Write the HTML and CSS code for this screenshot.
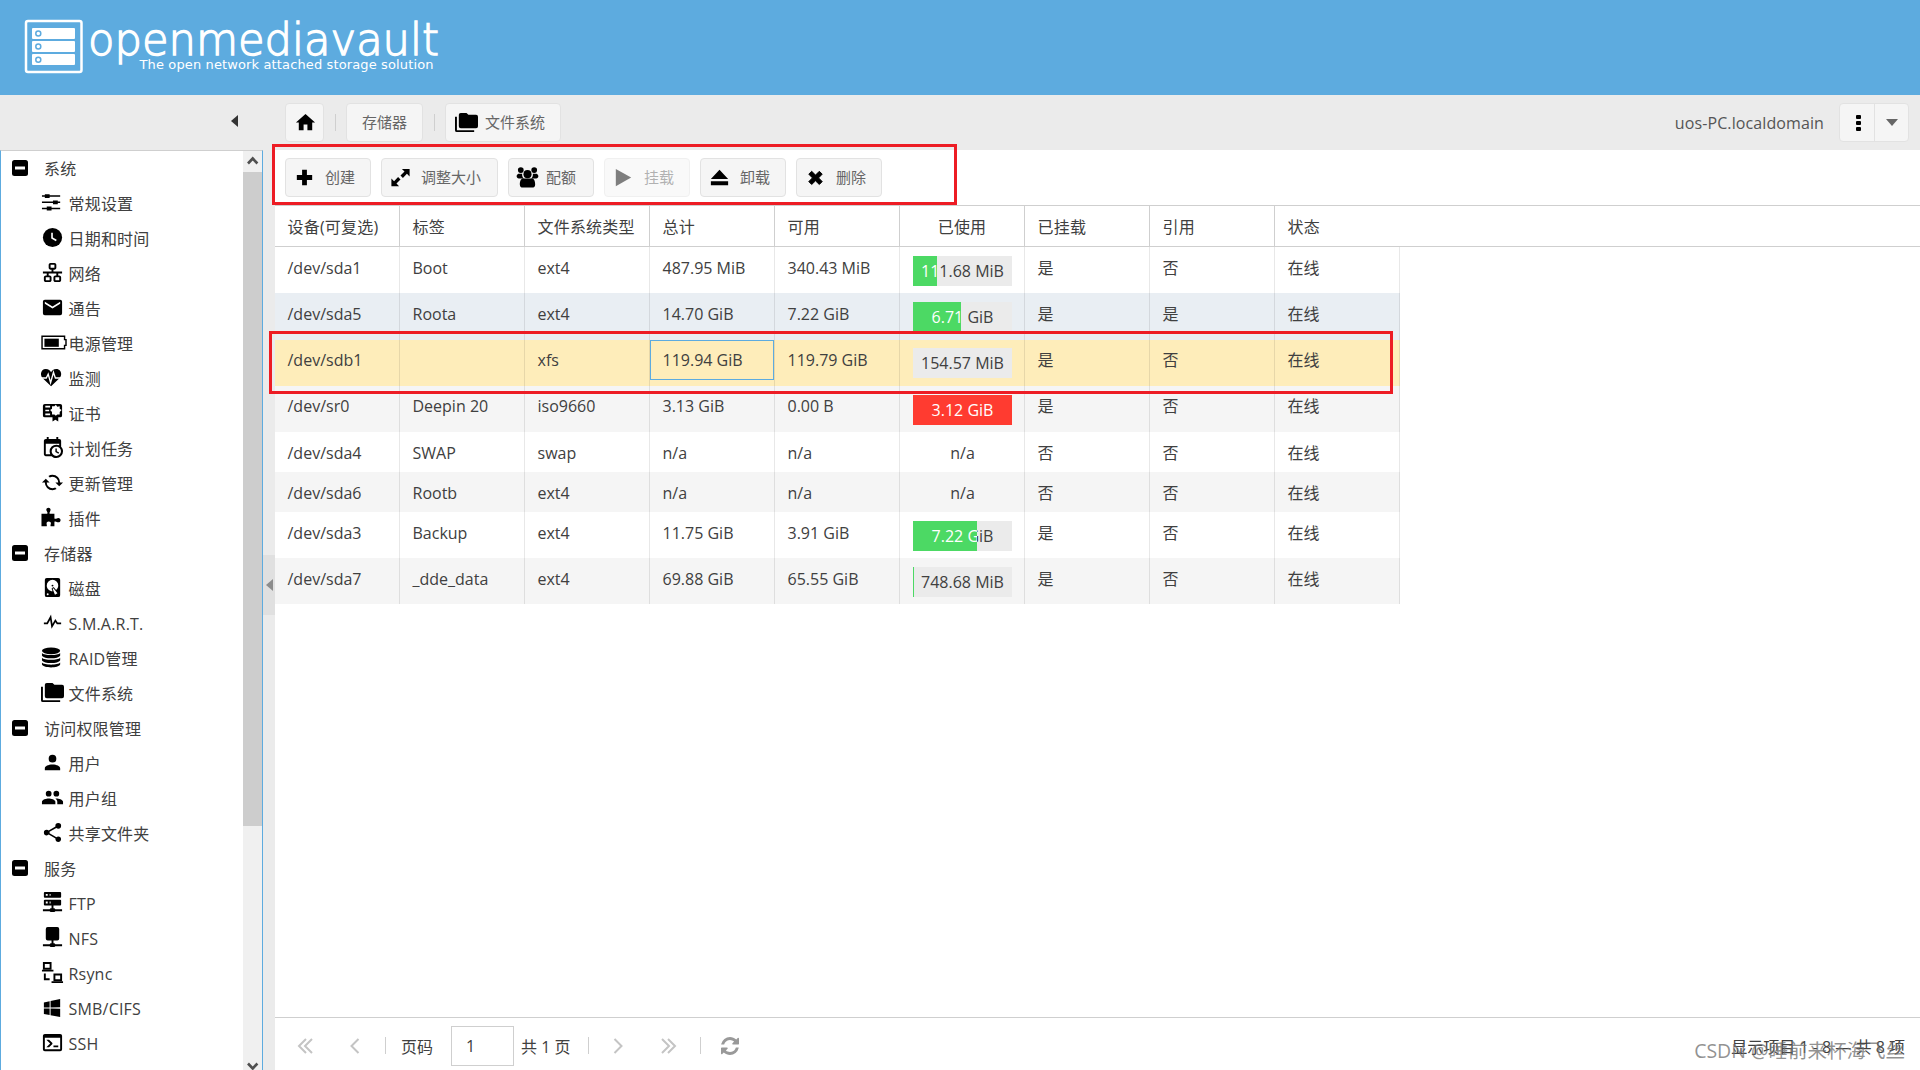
FILE: index.html
```html
<!DOCTYPE html>
<html lang="zh-CN">
<head>
    <meta charset="UTF-8">
    <meta name="viewport" content="width=device-width, initial-scale=1.0">
    <title>openmediavault</title>
    <link rel="stylesheet" href="styles.css">
</head>
<body>
    <!-- Icon definitions -->
    <svg class="defs">
        <symbol id="minus" viewBox="0 0 16 16"><rect width="16" height="16" rx="2.5"/><path d="M3 6.5h10v3H3z" fill="#fff"/></symbol>
        <symbol id="home" viewBox="0 0 24 24"><path d="M10,20V14H14V20H19V12H22L12,3L2,12H5V20H10Z"/></symbol>
        <symbol id="tune" viewBox="0 0 24 24"><path d="M1 4.500h19v1.600H1zM1 11h19v1.600H1zM1 17.500h19v1.600H1z"/><path d="M4 3.300h5v4H4zM12.500 9.800h5v4h-5zM6 16.300h5v4H6z"/></symbol>
        <symbol id="clock" viewBox="0 0 24 24"><circle cx="12" cy="12" r="10"/><path d="M11.500 7v5.500l4.500 2.700" fill="none" stroke="#fff" stroke-width="1.700"/></symbol>
        <symbol id="lan" viewBox="0 0 24 24"><path d="M10,2C8.89,2 8,2.89 8,4V7C8,8.11 8.89,9 10,9H11V11H2V13H6V15H5C3.89,15 3,15.89 3,17V20C3,21.11 3.89,22 5,22H9C10.11,22 11,21.11 11,20V17C11,15.89 10.11,15 9,15H8V13H16V15H15C13.89,15 13,15.89 13,17V20C13,21.11 13.89,22 15,22H19C20.11,22 21,21.11 21,20V17C21,15.89 20.11,15 19,15H18V13H22V11H13V9H14C15.11,9 16,8.11 16,7V4C16,2.89 15.11,2 14,2H10M10,4H14V7H10V4M5,17H9V20H5V17M15,17H19V20H15V17Z"/></symbol>
        <symbol id="email" viewBox="0 0 24 24"><path d="M20,8L12,13L4,8V6L12,11L20,6M20,4H4C2.89,4 2,4.89 2,6V18A2,2 0 0,0 4,20H20A2,2 0 0,0 22,18V6C22,4.89 21.1,4 20,4Z"/></symbol>
        <symbol id="battery" viewBox="0 0 28 24"><path d="M1 5.500h23.500v3.500H26v6h-1.500v3.500H1z" fill="none" stroke="#000" stroke-width="1.500"/><path d="M3.500 8h15v8.500h-15z"/></symbol>
        <symbol id="heart" viewBox="0 0 24 24"><path d="M10.500 21 1.500 12.500C-1.500 9 0 3 5 3c3 0 4.500 1.500 5.500 3.500C11.500 4.500 13 3 16 3c5 0 6.500 6 3.500 9.500z"/><path d="M0 12.500h5.500l2-4 2.500 9 3-11 2 6h6" fill="none" stroke="#fff" stroke-width="1.400"/></symbol>
        <symbol id="cert" viewBox="0 0 24 24"><path d="M4 3h16a2 2 0 0 1 2 2v10a2 2 0 0 1-2 2h-2v4.500l-3-2-3 2V17H4a2 2 0 0 1-2-2V5a2 2 0 0 1 2-2z"/><path d="M4.500 5h5v1.800h-5zM4.500 9h4v1.800h-4zM4.500 13h5v1.800h-5zM15.500 4l1.500 2 2.500-.5v2.500l2 1.500-2 2v2.500H17l-1.500 1.500L14 14h-2.500v-2.500l-2-2 2-1.500V5.500H14z" fill="#fff"/></symbol>
        <symbol id="calendar" viewBox="0 0 24 24"><path d="M15,13H16.5V15.82L18.94,17.23L18.19,18.53L15,16.69V13M19,8H5V19H9.67C9.24,18.09 9,17.07 9,16A7,7 0 0,1 16,9C17.07,9 18.09,9.24 19,9.67V8M5,21C3.89,21 3,20.1 3,19V5C3,3.89 3.89,3 5,3H6V1H8V3H16V1H18V3H19A2,2 0 0,1 21,5V11.1C22.24,12.36 23,14.09 23,16A7,7 0 0,1 16,23C14.09,23 12.36,22.24 11.1,21H5M16,11.15A4.85,4.85 0 0,0 11.15,16C11.15,18.68 13.32,20.85 16,20.85A4.85,4.85 0 0,0 20.85,16C20.85,13.32 18.68,11.15 16,11.15Z"/></symbol>
        <symbol id="update" viewBox="0 0 24 24"><path transform="matrix(1 0 0 -1 0 24)" d="M19,8L15,12H18A6,6 0 0,1 12,18C11,18 10.03,17.75 9.2,17.3L7.74,18.76C8.97,19.54 10.43,20 12,20A8,8 0 0,0 20,12H23M6,12A6,6 0 0,1 12,6C13,6 13.97,6.25 14.8,6.7L16.26,5.24C15.03,4.46 13.57,4 12,4A8,8 0 0,0 4,12H1L5,16L9,12"/></symbol>
        <symbol id="puzzle" viewBox="0 0 24 24"><path d="M.5 8h6c1-1.500-1-2.500-1-4 0-3 4.500-3 4.500 0 0 1.500-1.500 2.500-1 4h5v5c1.500 1 2.500-.5 4-.5 3.200 0 3.200 4.500 0 4.500-1.500 0-2.500-1.500-4-.5V21h-4c-.5-1.500 1-2.500 0-4-1-1.200-3-1.200-3.800 0-1 1.500.3 2.500-.2 4H.5z"/></symbol>
        <symbol id="disk" viewBox="0 0 24 24"><path d="M6,2H18A2,2 0 0,1 20,4V20A2,2 0 0,1 18,22H6A2,2 0 0,1 4,20V4A2,2 0 0,1 6,2M12,4A6,6 0 0,0 6,10C6,13.31 8.69,16 12.1,16L11.22,13.77C10.95,13.29 11.11,12.68 11.59,12.4L12.45,11.9C12.93,11.63 13.54,11.79 13.82,12.27L15.74,14.69C17.12,13.59 18,11.9 18,10A6,6 0 0,0 12,4M12,9A1,1 0 0,1 13,10A1,1 0 0,1 12,11A1,1 0 0,1 11,10A1,1 0 0,1 12,9M7,18A1,1 0 0,0 6,19A1,1 0 0,0 7,20A1,1 0 0,0 8,19A1,1 0 0,0 7,18M12.09,13.27L14.58,19.58L17.17,18.08L12.95,12.77L12.09,13.27Z"/></symbol>
        <symbol id="pulse" viewBox="0 0 24 24"><path d="M3 13h3.500L10 6.500l1.500 9.500 3.500-6 2 3h4" fill="none" stroke="#000" stroke-width="1.800"/></symbol>
        <symbol id="database" viewBox="0 0 24 24"><ellipse cx="10.500" cy="5" rx="9.500" ry="3.500"/><path d="M1 7.200c2 3 17 3 19 0v2.600c-2 4-17 4-19 0zM1 12.200c2 3 17 3 19 0v2.600c-2 4-17 4-19 0zM1 17.200c2 3 17 3 19 0v2.200c-2 4-17 4-19 0z"/></symbol>
        <symbol id="folders" viewBox="0 0 24 24"><path d="M22,4H14L12,2H6A2,2 0 0,0 4,4V16A2,2 0 0,0 6,18H22A2,2 0 0,0 24,16V6A2,2 0 0,0 22,4M2,6H0V20A2,2 0 0,0 2,22H20V20H2V6Z"/></symbol>
        <symbol id="user" viewBox="0 0 24 24"><path d="M12,4A4,4 0 0,1 16,8A4,4 0 0,1 12,12A4,4 0 0,1 8,8A4,4 0 0,1 12,4M12,14C16.42,14 20,15.79 20,18V20H4V18C4,15.79 7.58,14 12,14Z"/></symbol>
        <symbol id="users" viewBox="0 0 24 24"><path d="M16,13C15.71,13 15.38,13 15.03,13.05C16.19,13.89 17,15 17,16.5V19H23V16.5C23,14.17 18.33,13 16,13M8,13C5.67,13 1,14.17 1,16.5V19H15V16.5C15,14.17 10.33,13 8,13M8,11A3,3 0 0,0 11,8A3,3 0 0,0 8,5A3,3 0 0,0 5,8A3,3 0 0,0 8,11M16,11A3,3 0 0,0 19,8A3,3 0 0,0 16,5A3,3 0 0,0 13,8A3,3 0 0,0 16,11Z"/></symbol>
        <symbol id="share" viewBox="0 0 24 24"><path d="M18,16.08C17.24,16.08 16.56,16.38 16.04,16.85L8.91,12.7C8.96,12.47 9,12.24 9,12C9,11.76 8.96,11.53 8.91,11.3L15.96,7.19C16.5,7.69 17.21,8 18,8A3,3 0 0,0 21,5A3,3 0 0,0 18,2A3,3 0 0,0 15,5C15,5.24 15.04,5.47 15.09,5.7L8.04,9.81C7.5,9.31 6.79,9 6,9A3,3 0 0,0 3,12A3,3 0 0,0 6,15C6.79,15 7.5,14.69 8.04,14.19L15.16,18.34C15.11,18.55 15.08,18.77 15.08,19C15.08,20.61 16.39,21.91 18,21.91C19.61,21.91 20.92,20.61 20.92,19A2.92,2.92 0 0,0 18,16.08Z"/></symbol>
        <symbol id="ftp" viewBox="0 0 24 24"><path d="M4 1h16a1 1 0 0 1 1 1v4a1 1 0 0 1-1 1H4a1 1 0 0 1-1-1V2a1 1 0 0 1 1-1zM4 9h16a1 1 0 0 1 1 1v4a1 1 0 0 1-1 1h-7v3h1l1 1h7v2h-7l-1 1h-4l-1-1H2v-2h7l1-1h1v-3H4a1 1 0 0 1-1-1v-4a1 1 0 0 1 1-1z"/><path d="M5 3h2v2H5zM9 3h1v2H9zM5 11h2v2H5zM9 11h1v2H9z" fill="#fff"/></symbol>
        <symbol id="nfs" viewBox="0 0 24 24"><path d="M7 1h10a2 2 0 0 1 2 2v10a2 2 0 0 1-2 2h-4v3h1l1 1h7v2h-7l-1 1h-4l-1-1H2v-2h7l1-1h1v-3H7a2 2 0 0 1-2-2V3a2 2 0 0 1 2-2z"/></symbol>
        <symbol id="rsync" viewBox="0 0 24 24"><path d="M3 2h7v6H3zM14 14h7v6h-7z" fill="none" stroke="#000" stroke-width="2"/><path d="M1 9h12v2H1zM11 21h12v2H11zM3 13h2v5h4v2H3z"/></symbol>
        <symbol id="windows" viewBox="0 0 24 24"><path d="M3,12V6.75L9,5.43V11.91L3,12M20,3V11.75L10,11.9V5.21L20,3M3,13L9,13.09V19.9L3,18.75V13M20,13.25V22L10,20.09V13.1L20,13.25Z"/></symbol>
        <symbol id="console" viewBox="0 0 24 24"><path d="M20,19V7H4V19H20M20,3A2,2 0 0,1 22,5V19A2,2 0 0,1 20,21H4A2,2 0 0,1 2,19V5C2,3.89 2.9,3 4,3H20M13,17V15H18V17H13M9.58,13L5.57,9H8.4L11.7,12.3C12.09,12.69 12.09,13.33 11.7,13.72L8.42,17H5.59L9.58,13Z"/></symbol>
        <symbol id="plus" viewBox="0 0 24 24"><path d="M9.500 4h5v5.500H20v5h-5.500V20h-5v-5.500H4v-5h5.500z"/></symbol>
        <symbol id="expand" viewBox="0 0 24 24"><path d="M13.500 3H21.500V11L18.700 8.200 14.500 12.400 12 9.900 16.200 5.700zM2.500 13l2.800 2.800 4.200-4.200 2.500 2.500-4.200 4.200L10.500 21h-8z"/></symbol>
        <symbol id="group" viewBox="0 0 24 24"><circle cx="5" cy="4.300" r="3"/><circle cx="19" cy="4.300" r="3"/><circle cx="12" cy="8.500" r="4.200"/><path d="M2.500 8h4c-.5 2 .5 4 1.500 5H3C.5 13-.5 9.500 2.500 8zM21.500 8h-4c.5 2-.5 4-1.500 5h5c2.500 0 3.500-3.500.5-5zM7.500 13h9c2.500 0 3.500 3 3.500 6.500 0 2-1.500 3-3 3H7c-1.500 0-3-1-3-3C4 16 5 13 7.500 13z"/></symbol>
        <symbol id="play" viewBox="0 0 24 24"><path d="M4 3 20 12 4 21z"/></symbol>
        <symbol id="eject" viewBox="0 0 24 24"><path d="M12 4 21 13.500H3zM3 16h18v4H3z"/></symbol>
        <symbol id="cross" viewBox="0 0 24 24"><path d="M8 5.500 12 9.500 16 5.500 19 8.500 15.200 12.400 19 16.300 16 19.300 12 15.500 8 19.300 5 16.300 8.800 12.400 5 8.500z" stroke="#000" stroke-linejoin="round"/></symbol>
        <symbol id="refresh" viewBox="0 0 1536 1536"><path d="M1511 928q0 5-1 7-64 268-268 434.5t-478 166.5q-146 0-282.500-55t-243.500-157l-129 129q-19 19-45 19t-45-19-19-45v-448q0-26 19-45t45-19h448q26 0 45 19t19 45-19 45l-137 137q71 66 161 102t187 36q134 0 250-65t186-179q11-17 53-117 8-23 30-23h192q13 0 22.500 9.500t9.500 22.500zm25-800v448q0 26-19 45t-45 19h-448q-26 0-45-19t-19-45 19-45l138-138q-148-137-349-137-134 0-250 65t-186 179q-11 17-53 117-8 23-30 23h-199q-13 0-22.500-9.500t-9.500-22.500v-7q65-268 270-434.500t480-166.500q146 0 284 55.500t245 156.500l130-129q19-19 45-19t45 19 19 45z"/></symbol>
        <symbol id="chevron" viewBox="0 0 10 16"><path d="M8.500 1 1.500 8l7 7" fill="none" stroke="#c4c4c4" stroke-width="2"/></symbol>
        <symbol id="dchevron" viewBox="0 0 16 16"><path d="M9 1 2 8l7 7M15 1 8 8l7 7" fill="none" stroke="#c4c4c4" stroke-width="2"/></symbol>
    </svg>

    <header>
        <svg class="logo" width="450" height="95">
            <rect x="26" y="21" width="55.500" height="51" rx="2" fill="none" stroke="#fff" stroke-width="2.500"/>
            <g fill="#fff">
                <rect x="32" y="28" width="43" height="11" rx="1"/>
                <rect x="32" y="41" width="43" height="11" rx="1"/>
                <rect x="32" y="54" width="43" height="11" rx="1"/>
            </g>
            <g fill="none" stroke="#5dabdf" stroke-width="1.500">
                <circle cx="38.300" cy="33.500" r="2.500"/>
                <circle cx="38.300" cy="46.500" r="2.500"/>
                <circle cx="38.300" cy="59.700" r="2.500"/>
            </g>
            <text class="logo-name" x="88" y="54.500" textLength="351" lengthAdjust="spacingAndGlyphs">openmediavault</text>
            <text class="logo-tag" x="139.500" y="69" textLength="294">The open network attached storage solution</text>
        </svg>
    </header>

    <div class="topbar">
        <div class="collapse"><span class="tri-left"></span></div>
        <div class="crumbs">
            <a class="btn btn-home"><svg class="icon"><use href="#home"/></svg></a>
            <span class="sep"></span>
            <a class="btn btn-storage">存储器</a>
            <span class="sep"></span>
            <a class="btn btn-fs"><svg class="icon"><use href="#folders"/></svg>文件系统</a>
        </div>
        <span class="host">uos-PC.localdomain</span>
        <div class="split-btn">
            <span class="dots"><i></i><i></i><i></i></span>
            <span class="drop"><span class="tri-down"></span></span>
        </div>
    </div>

    <div class="container">
        <nav>
            <ul class="tree">
                <li class="parent"><svg><use href="#minus"/></svg>系统</li>
                <li><svg><use href="#tune"/></svg>常规设置</li>
                <li><svg><use href="#clock"/></svg>日期和时间</li>
                <li><svg><use href="#lan"/></svg>网络</li>
                <li><svg><use href="#email"/></svg>通告</li>
                <li class="wide"><svg><use href="#battery"/></svg>电源管理</li>
                <li><svg><use href="#heart"/></svg>监测</li>
                <li><svg><use href="#cert"/></svg>证书</li>
                <li><svg><use href="#calendar"/></svg>计划任务</li>
                <li><svg><use href="#update"/></svg>更新管理</li>
                <li><svg><use href="#puzzle"/></svg>插件</li>
                <li class="parent"><svg><use href="#minus"/></svg>存储器</li>
                <li><svg><use href="#disk"/></svg>磁盘</li>
                <li class="latin"><svg><use href="#pulse"/></svg>S.M.A.R.T.</li>
                <li><svg><use href="#database"/></svg>RAID管理</li>
                <li><svg><use href="#folders"/></svg>文件系统</li>
                <li class="parent"><svg><use href="#minus"/></svg>访问权限管理</li>
                <li><svg><use href="#user"/></svg>用户</li>
                <li><svg><use href="#users"/></svg>用户组</li>
                <li><svg><use href="#share"/></svg>共享文件夹</li>
                <li class="parent"><svg><use href="#minus"/></svg>服务</li>
                <li class="latin"><svg><use href="#ftp"/></svg>FTP</li>
                <li class="latin"><svg><use href="#nfs"/></svg>NFS</li>
                <li class="latin"><svg><use href="#rsync"/></svg>Rsync</li>
                <li class="latin"><svg><use href="#windows"/></svg>SMB/CIFS</li>
                <li class="latin"><svg><use href="#console"/></svg>SSH</li>
            </ul>
            <div class="scrollbar">
                <svg class="arrow" viewBox="0 0 19 21"><path d="M5 12.500 9.700 7.500l4.700 5" fill="none" stroke="#505050" stroke-width="2.600"/></svg>
                <div class="thumb"></div>
                <svg class="arrow arrow-down" viewBox="0 0 19 21"><path d="M5 14.500 9.700 19.500l4.700-5" fill="none" stroke="#505050" stroke-width="2.600"/></svg>
            </div>
        </nav>
        <div class="splitter"><div class="handle"><span class="tri-left"></span></div></div>

        <main>
            <div class="toolbar">
                <button class="w86"><svg class="icon"><use href="#plus"/></svg>创建</button>
                <button class="w116"><svg class="icon"><use href="#expand"/></svg>调整大小</button>
                <button class="w86 quota"><svg class="icon"><use href="#group"/></svg>配额</button>
                <button class="w86" disabled><svg class="icon"><use href="#play"/></svg>挂载</button>
                <button class="w86"><svg class="icon"><use href="#eject"/></svg>卸载</button>
                <button class="w86"><svg class="icon"><use href="#cross"/></svg>删除</button>
            </div>

            <div class="thead">
                <span>设备(可复选)</span><span>标签</span><span>文件系统类型</span><span>总计</span><span>可用</span><span class="center">已使用</span><span>已挂载</span><span>引用</span><span>状态</span>
            </div>
            <div class="grid">
                <table>
                    <tbody id="fsTableBody">
                        <!-- File systems will be dynamically added here -->
                    </tbody>
                </table>
            </div>

            <div class="pager">
                <svg class="first"><use href="#dchevron"/></svg>
                <svg class="prev"><use href="#chevron"/></svg>
                <span class="sep"></span>
                <span class="page-label">页码</span>
                <input type="text" value="1">
                <span class="page-total">共 1 页</span>
                <span class="sep"></span>
                <svg class="next"><use href="#chevron"/></svg>
                <svg class="last"><use href="#dchevron"/></svg>
                <span class="sep"></span>
                <svg class="refresh"><use href="#refresh"/></svg>
                <span class="summary">显示项目 1 - 8 — 共 8 项</span>
            </div>
        </main>
    </div>

    <div class="mark mark-toolbar"></div>
    <div class="mark mark-row"></div>
    <div class="watermark">CSDN @睡前来杯海飞丝</div>

    <script>
        const filesystems = [
            { dev: '/dev/sda1', label: 'Boot', type: 'ext4', total: '487.95 MiB', free: '340.43 MiB', used: '111.68 MiB', percent: 24, mounted: '是', ref: '否' },
            { dev: '/dev/sda5', label: 'Roota', type: 'ext4', total: '14.70 GiB', free: '7.22 GiB', used: '6.71 GiB', percent: 48.5, mounted: '是', ref: '是', cls: 'over' },
            { dev: '/dev/sdb1', label: '', type: 'xfs', total: '119.94 GiB', free: '119.79 GiB', used: '154.57 MiB', percent: 0, mounted: '是', ref: '否', cls: 'selected' },
            { dev: '/dev/sr0', label: 'Deepin 20', type: 'iso9660', total: '3.13 GiB', free: '0.00 B', used: '3.12 GiB', percent: 100, mounted: '是', ref: '否', cls: 'full' },
            { dev: '/dev/sda4', label: 'SWAP', type: 'swap', total: 'n/a', free: 'n/a', used: 'n/a', mounted: '否', ref: '否', cls: 'short' },
            { dev: '/dev/sda6', label: 'Rootb', type: 'ext4', total: 'n/a', free: 'n/a', used: 'n/a', mounted: '否', ref: '否', cls: 'short' },
            { dev: '/dev/sda3', label: 'Backup', type: 'ext4', total: '11.75 GiB', free: '3.91 GiB', used: '7.22 GiB', percent: 65, mounted: '是', ref: '否' },
            { dev: '/dev/sda7', label: '_dde_data', type: 'ext4', total: '69.88 GiB', free: '65.55 GiB', used: '748.68 MiB', percent: 1.5, mounted: '是', ref: '否' }
        ];

        function usage(fs) {
            if (fs.percent === undefined) {
                return fs.used;
            }
            if (fs.percent === 0) {
                return `<div class="progress">${fs.used}</div>`;
            }
            return `<div class="progress">${fs.used}<div class="bar" style="width: ${fs.percent}%"><span>${fs.used}</span></div></div>`;
        }

        const tableBody = document.getElementById('fsTableBody');
        filesystems.forEach(fs => {
            const row = document.createElement('tr');
            row.className = fs.cls || '';
            row.innerHTML = `
                <td>${fs.dev}</td>
                <td>${fs.label}</td>
                <td>${fs.type}</td>
                <td>${fs.total}</td>
                <td>${fs.free}</td>
                <td class="center">${usage(fs)}</td>
                <td>${fs.mounted}</td>
                <td>${fs.ref}</td>
                <td>在线</td>
            `;
            tableBody.appendChild(row);
        });
    </script>
</body>
</html>
```
FILE: styles.css
```css
* {
    box-sizing: border-box;
}
body {
    font-family: "Open Sans", "Noto Sans CJK SC", sans-serif;
    font-size: 16px;
    font-weight: 400;
    color: #404040;
    margin: 0;
    height: 1070px;
    overflow: hidden;
    display: flex;
    flex-direction: column;
    background-color: #fff;
}
svg {
    display: block;
    flex: none;
}
.defs {
    position: absolute;
    width: 0;
    height: 0;
}
header {
    height: 95px;
    flex: none;
    background-color: #5dabdf;
}
.logo-name {
    font-family: "DejaVu Sans Light", "DejaVu Sans", sans-serif;
    font-weight: 200;
    font-size: 44px;
    fill: #fff;
    stroke: #fff;
    stroke-width: 1.3px;
}
.logo-tag {
    font-family: "DejaVu Sans", sans-serif;
    font-size: 13px;
    fill: #fff;
}

/* top bar */
.topbar {
    height: 55px;
    flex: none;
    display: flex;
    align-items: center;
    background-color: #ebebeb;
    padding-right: 11px;
}
.collapse {
    width: 285px;
    padding-left: 231px;
    padding-bottom: 3px;
}
.tri-left {
    display: block;
    width: 0;
    border: 6px solid transparent;
    border-left: 0;
    border-right: 7px solid #333;
}
.tri-down {
    width: 0;
    border: 6px solid transparent;
    border-bottom: 0;
    border-top: 7px solid #666;
}
.crumbs {
    display: flex;
    align-items: center;
}
.btn,
.toolbar button {
    height: 39px;
    display: flex;
    align-items: center;
    font-family: inherit;
    font-size: 15px;
    color: #666;
    background-color: #f5f5f5;
    border: 1px solid #e2e2e2;
    border-radius: 4px;
    padding: 0 0 2px;
}
.icon {
    width: 23px;
    height: 23px;
    margin-top: 2px;
}
.btn-home {
    width: 39px;
    padding-left: 8px;
}
.btn-storage {
    width: 77px;
    justify-content: center;
}
.btn-fs {
    width: 116px;
    padding-left: 9px;
    gap: 7px;
}
.sep {
    width: 1px;
    height: 17px;
    background-color: #cfcfcf;
    margin: 0 10px 0 11px;
}
.host {
    margin-left: auto;
    margin-right: 15px;
    color: #555;
    letter-spacing: 0.1px;
}
.split-btn {
    display: flex;
    width: 70px;
    height: 39px;
    background-color: #f5f5f5;
    border: 1px solid #e2e2e2;
    border-radius: 4px;
}
.dots {
    width: 35px;
    display: flex;
    flex-direction: column;
    align-items: center;
    justify-content: center;
    gap: 2px;
    border-right: 1px solid #e2e2e2;
    padding-left: 3px;
}
.dots i {
    width: 5px;
    height: 4px;
    border-radius: 1px;
    background-color: #000;
}
.drop {
    flex: 1;
    display: flex;
    align-items: center;
    justify-content: center;
}

/* sidebar */
.container {
    flex: 1;
    min-height: 0;
    display: flex;
}
nav {
    width: 263px;
    display: flex;
    justify-content: space-between;
    border-left: 1px solid #5dabdf;
    border-right: 1px solid #5dabdf;
    border-top: 1px solid #cfcfcf;
    overflow: hidden;
}
.tree {
    list-style: none;
    margin: 0;
    padding: 0;
}
.tree li {
    height: 35px;
    display: flex;
    align-items: center;
    padding-left: 40px;
    padding-bottom: 2px;
    letter-spacing: 0.2px;
    white-space: nowrap;
}
.tree .latin {
    padding-bottom: 0;
}
.tree svg {
    width: 23px;
    height: 23px;
    margin-right: 4.5px;
    margin-top: -1px;
}
.tree .latin svg {
    margin-top: -3px;
}
.tree .wide svg {
    width: 27px;
    margin-right: 0.5px;
}
.tree .parent {
    padding-left: 11px;
}
.tree .parent svg {
    width: 16px;
    height: 16px;
    margin-right: 16px;
    margin-top: 1px;
}
.scrollbar {
    width: 19px;
    display: flex;
    flex-direction: column;
    background-color: #f0f0f0;
}
.arrow {
    width: 19px;
    height: 21px;
}
.arrow-down {
    margin-top: auto;
}
.thumb {
    height: 654px;
    background-color: #cdcdcd;
}
.splitter {
    width: 12px;
    background-color: #ebebeb;
    padding-top: 405px;
}
.handle {
    height: 60px;
    display: flex;
    align-items: center;
    justify-content: center;
    background-color: #e0e0e0;
}
.handle .tri-left {
    border-right-color: #8c8c8c;
}

/* content */
main {
    flex: 1;
    display: flex;
    flex-direction: column;
    background-color: #fff;
}
.toolbar {
    height: 55px;
    display: flex;
    padding: 8px 10px;
    gap: 10px;
}
.toolbar button {
    padding-left: 7px;
    gap: 9px;
}
.toolbar .w86 {
    width: 86px;
}
.toolbar .w116 {
    width: 117px;
}
.toolbar .quota {
    gap: 7px;
}
.toolbar button:disabled {
    opacity: 0.5;
}
.thead {
    display: flex;
    height: 42px;
    border-top: 1px solid #cfcfcf;
    border-bottom: 1px solid #cfcfcf;
}
.thead span {
    width: 125px;
    padding-left: 12.5px;
    line-height: 42px;
    letter-spacing: 0.2px;
    white-space: nowrap;
    border-right: 1px solid #cfcfcf;
}
.thead span:last-child {
    border-right: none;
}
.thead .center {
    padding: 0;
    text-align: center;
}
.grid {
    flex: 1;
}
table {
    width: 1125px;
    table-layout: fixed;
    border-collapse: separate;
    border-spacing: 0;
}
tr {
    height: 46px;
}
tr.over {
    height: 47px;
}
tr.short {
    height: 40px;
}
tr:nth-child(even) {
    background-color: #f5f5f5;
}
tr.over:nth-child(even) {
    background-color: #e9eef3;
}
tr.selected {
    background-color: #feedba;
}
td {
    padding: 10px 0 0 12.5px;
    line-height: 22px;
    vertical-align: top;
    border-right: 1px solid rgba(0, 0, 0, 0.09);
}
td.center {
    padding: 9px 12px 0 13px;
    text-align: center;
}
tr.selected td,
tr.full td {
    padding-top: 9px;
}
tr.selected td.center {
    padding-top: 8px;
}
tr.short td {
    padding-top: 10px;
}
tr.selected td:nth-child(4) {
    background: linear-gradient(#5dabdf, #5dabdf) 0 0 / 100% 1px no-repeat,
        linear-gradient(#5dabdf, #5dabdf) 0 39px / 100% 1px no-repeat,
        linear-gradient(#5dabdf, #5dabdf) 0 0 / 1px 40px no-repeat,
        linear-gradient(#5dabdf, #5dabdf) 100% 0 / 1px 40px no-repeat;
    background-origin: padding-box;
}
.progress {
    position: relative;
    height: 30px;
    line-height: 30px;
    background-color: #ebebeb;
    white-space: nowrap;
}
.bar {
    position: absolute;
    left: 0;
    top: 0;
    height: 100%;
    overflow: hidden;
    background-color: #4cd964;
    color: #fff;
}
.bar span {
    display: block;
    width: 99px;
}
.full .bar {
    background-color: #ff3b30;
}

/* paging */
.pager {
    height: 53px;
    flex: none;
    display: flex;
    align-items: center;
    border-top: 1px solid #cfcfcf;
    padding: 3px 15px 0 22px;
}
.pager svg {
    height: 16px;
    width: 16px;
}
.pager .prev,
.pager .next {
    width: 10px;
}
.pager .prev {
    margin: 0 14px 0 37px;
}
.pager .next {
    margin: 0 38px 0 14px;
}
.pager .next,
.pager .last {
    transform: scaleX(-1);
}
.pager .last {
    margin-right: 12px;
}
.pager .refresh {
    width: 18px;
    height: 18px;
    fill: #999;
    margin-left: 10px;
}
.page-label {
    margin-left: 5px;
}
.pager input {
    width: 63px;
    height: 40px;
    margin: 0 7px 0 18px;
    padding: 0 0 0 14px;
    font-family: inherit;
    font-size: 16px;
    color: #404040;
    border: 1px solid #cfcfcf;
}
.page-total {
    margin-right: 7px;
}
.summary {
    margin-left: auto;
}

/* annotations */
.mark {
    position: absolute;
    border: 3px solid #ed1c24;
}
.mark-toolbar {
    left: 272px;
    top: 144px;
    width: 685px;
    height: 61px;
}
.mark-row {
    left: 269px;
    top: 331px;
    width: 1124px;
    height: 63px;
}
.watermark {
    position: absolute;
    right: 15px;
    top: 1037px;
    font-size: 19.5px;
    line-height: 28px;
    color: rgba(110, 110, 110, 0.75);
}
```
